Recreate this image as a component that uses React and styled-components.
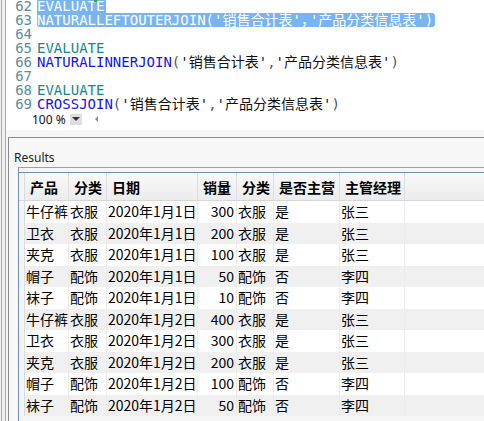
import React from "react";
import styled, { createGlobalStyle } from "styled-components";

const Global = createGlobalStyle`
  html, body { margin: 0; padding: 0; background: #f0f0f0; overflow: hidden; }
  #root { width: 484px; height: 421px; }
`;

const Shell = styled.div`
  width: 483px;
  height: 421px;
  margin-left: 1px;
  border-left: 1px solid #a9a9a9;
  padding-left: 3px;
  box-sizing: border-box;
  background: #f0f0f0;
  overflow: hidden;
`;

const Inner = styled.div`
  height: 100%;
  border-left: 1px solid #a9a9a9;
  display: flex;
  flex-direction: column;
  background: #f7f7f7;
`;

const Editor = styled.div`
  position: relative;
  height: 130px;
  background: #ffffff;
  overflow: hidden;
  flex: none;
`;

const Lines = styled.div`
  margin-top: -1px;
  font-family: "DejaVu Sans Mono", "Noto Sans CJK SC", monospace;
  font-size: 14px;
  line-height: 14px;
`;

const Line = styled.div`
  display: flex;
  height: 14px;
  white-space: pre;
`;

const Num = styled.span`
  width: 26px;
  text-align: right;
  color: #5b8d99;
  flex: none;
`;

const Code = styled.span`
  margin-left: 5px;
  display: inline-flex;
  ${(p) =>
    p.$sel &&
    `background: #78b4f2; color: #fff; border-radius: ${p.$first ? "3px 3px 0 0" : "0 3px 3px 3px"}; padding-right: 2px;`}
`;

const Tok = styled.span`
  color: ${(p) => p.$c};
`;

const WideComma = styled.span`
  display: inline-block;
  width: 9px;
  overflow: visible;
`;

const Marker = styled.span`
  position: absolute;
  left: 88px;
  top: 0;
  width: 3px;
  height: 2px;
  background: #2fa82f;
`;

const ZoomBar = styled.div`
  display: flex;
  align-items: center;
  height: 14px;
  margin-top: 1px;
  padding-left: 26px;
  font-family: "Noto Sans", "Liberation Sans", sans-serif;
  font-size: 12px;
  color: #111;
`;

const ZoomDrop = styled.span`
  width: 12px;
  height: 11px;
  margin-left: 4px;
  background: #dedede;
  display: flex;
  align-items: center;
  justify-content: center;
  &::after {
    content: "";
    border-left: 4px solid transparent;
    border-right: 4px solid transparent;
    border-top: 4px solid #333;
  }
`;

const ScrollLeft = styled.span`
  margin-left: 13px;
  width: 0;
  height: 0;
  border-top: 3px solid transparent;
  border-bottom: 3px solid transparent;
  border-right: 3px solid #888;
`;

const Splitter = styled.div`
  height: 7px;
  flex: none;
  background: #f7f7f7;
`;

const ResultsPanel = styled.div`
  flex: 1;
  margin-left: 2px;
  border-top: 1px solid #8c8c8c;
  border-left: 1px solid #8c8c8c;
  background: #f7f7f7;
  display: flex;
  flex-direction: column;
  min-height: 0;
`;

const Title = styled.div`
  height: 29px;
  padding: 0 0 1px 5px;
  box-sizing: border-box;
  display: flex;
  align-items: flex-end;
  font-family: "Noto Sans", "Liberation Sans", sans-serif;
  font-size: 12px;
  line-height: 16px;
  color: #222;
  flex: none;
`;

const GridWrap = styled.div`
  margin-left: 9px;
  border-top: 1px solid #a0a0a0;
  border-left: 1px solid #6f8fb8;
  padding-top: 4px;
  flex: 1;
  background: #f5f5f5;
`;

const Grid = styled.div`
  border-top: 1px solid #6f8fb8;
  font-family: "Noto Sans CJK SC", "Noto Sans", sans-serif;
  font-size: 14px;
  color: #000;
`;

const cols = "6px 44px 38px 91px 39px 37px 66px 65px 1fr";

const HeadRow = styled.div`
  display: grid;
  grid-template-columns: ${cols};
  height: 27px;
  background: linear-gradient(#f9f9f9, #ececec);
  border-bottom: 1px solid #d6d6d6;
`;

const HeadCell = styled.div`
  display: flex;
  align-items: center;
  padding-left: 5px;
  font-weight: 700;
  border-right: 1px solid #dedede;
  box-sizing: border-box;
  white-space: nowrap;
  overflow: hidden;
  &:last-child { border-right: none; }
`;

const Row = styled.div`
  display: grid;
  grid-template-columns: ${cols};
  height: 21.5px;
  background: ${(p) => (p.$alt ? "#f0f0f0" : "#ffffff")};
`;

const Cell = styled.div`
  display: flex;
  align-items: center;
  justify-content: ${(p) => (p.$right ? "flex-end" : "flex-start")};
  padding: 0 2px 0 1px;
  border-right: 1px solid #ececec;
  box-sizing: border-box;
  white-space: nowrap;
  overflow: hidden;
  line-height: 21px;
  &:last-child { border-right: none; }
`;

const Gutter = styled.div`
  border-right: 1px solid #dcdcdc;
  background: #f4f4f4;
  box-sizing: border-box;
`;

const C = {
  kw: "#138a8a",
  fn: "#1515e6",
  pn: "#555555",
  st: "#111111",
};

function Call({ fn, a, b }) {
  return (
    <>
      <Tok $c={C.fn}>{fn}</Tok>
      <Tok $c={C.pn}>(</Tok>
      <Tok $c={C.st}>'{a}'</Tok>
      <Tok $c={C.pn}>,</Tok>
      <Tok $c={C.st}>'{b}'</Tok>
      <Tok $c={C.pn}>)</Tok>
    </>
  );
}

const rows = [
  ["牛仔裤", "衣服", "2020年1月1日", "300", "衣服", "是", "张三"],
  ["卫衣", "衣服", "2020年1月1日", "200", "衣服", "是", "张三"],
  ["夹克", "衣服", "2020年1月1日", "100", "衣服", "是", "张三"],
  ["帽子", "配饰", "2020年1月1日", "50", "配饰", "否", "李四"],
  ["袜子", "配饰", "2020年1月1日", "10", "配饰", "否", "李四"],
  ["牛仔裤", "衣服", "2020年1月2日", "400", "衣服", "是", "张三"],
  ["卫衣", "衣服", "2020年1月2日", "300", "衣服", "是", "张三"],
  ["夹克", "衣服", "2020年1月2日", "200", "衣服", "是", "张三"],
  ["帽子", "配饰", "2020年1月2日", "100", "配饰", "否", "李四"],
  ["袜子", "配饰", "2020年1月2日", "50", "配饰", "否", "李四"],
];

const heads = ["产品", "分类", "日期", "销量", "分类", "是否主营", "主管经理"];

export default function App() {
  return (
    <>
      <Global />
      <Shell>
        <Inner>
          <Editor>
            <Marker />
            <Lines>
              <Line>
                <Num>62</Num>
                <Code $sel $first>EVALUATE</Code>
              </Line>
              <Line>
                <Num>63</Num>
                <Code $sel>
                  NATURALLEFTOUTERJOIN('销售合计表'<WideComma>，</WideComma>'产品分类信息表')
                </Code>
              </Line>
              <Line>
                <Num>64</Num>
              </Line>
              <Line>
                <Num>65</Num>
                <Code><Tok $c={C.kw}>EVALUATE</Tok></Code>
              </Line>
              <Line>
                <Num>66</Num>
                <Code><Call fn="NATURALINNERJOIN" a="销售合计表" b="产品分类信息表" /></Code>
              </Line>
              <Line>
                <Num>67</Num>
              </Line>
              <Line>
                <Num>68</Num>
                <Code><Tok $c={C.kw}>EVALUATE</Tok></Code>
              </Line>
              <Line>
                <Num>69</Num>
                <Code><Call fn="CROSSJOIN" a="销售合计表" b="产品分类信息表" /></Code>
              </Line>
            </Lines>
            <ZoomBar>
              100 %
              <ZoomDrop />
              <ScrollLeft />
            </ZoomBar>
          </Editor>
          <Splitter />
          <ResultsPanel>
            <Title>Results</Title>
            <GridWrap>
              <Grid>
                <HeadRow>
                  <Gutter />
                  {heads.map((h, i) => (
                    <HeadCell key={i}>{h}</HeadCell>
                  ))}
                  <HeadCell />
                </HeadRow>
                {rows.map((r, i) => (
                  <Row key={i} $alt={i % 2 === 1}>
                    <Gutter />
                    {r.map((v, j) => (
                      <Cell key={j} $right={j === 3}>{v}</Cell>
                    ))}
                    <Cell />
                  </Row>
                ))}
              </Grid>
            </GridWrap>
          </ResultsPanel>
        </Inner>
      </Shell>
    </>
  );
}
